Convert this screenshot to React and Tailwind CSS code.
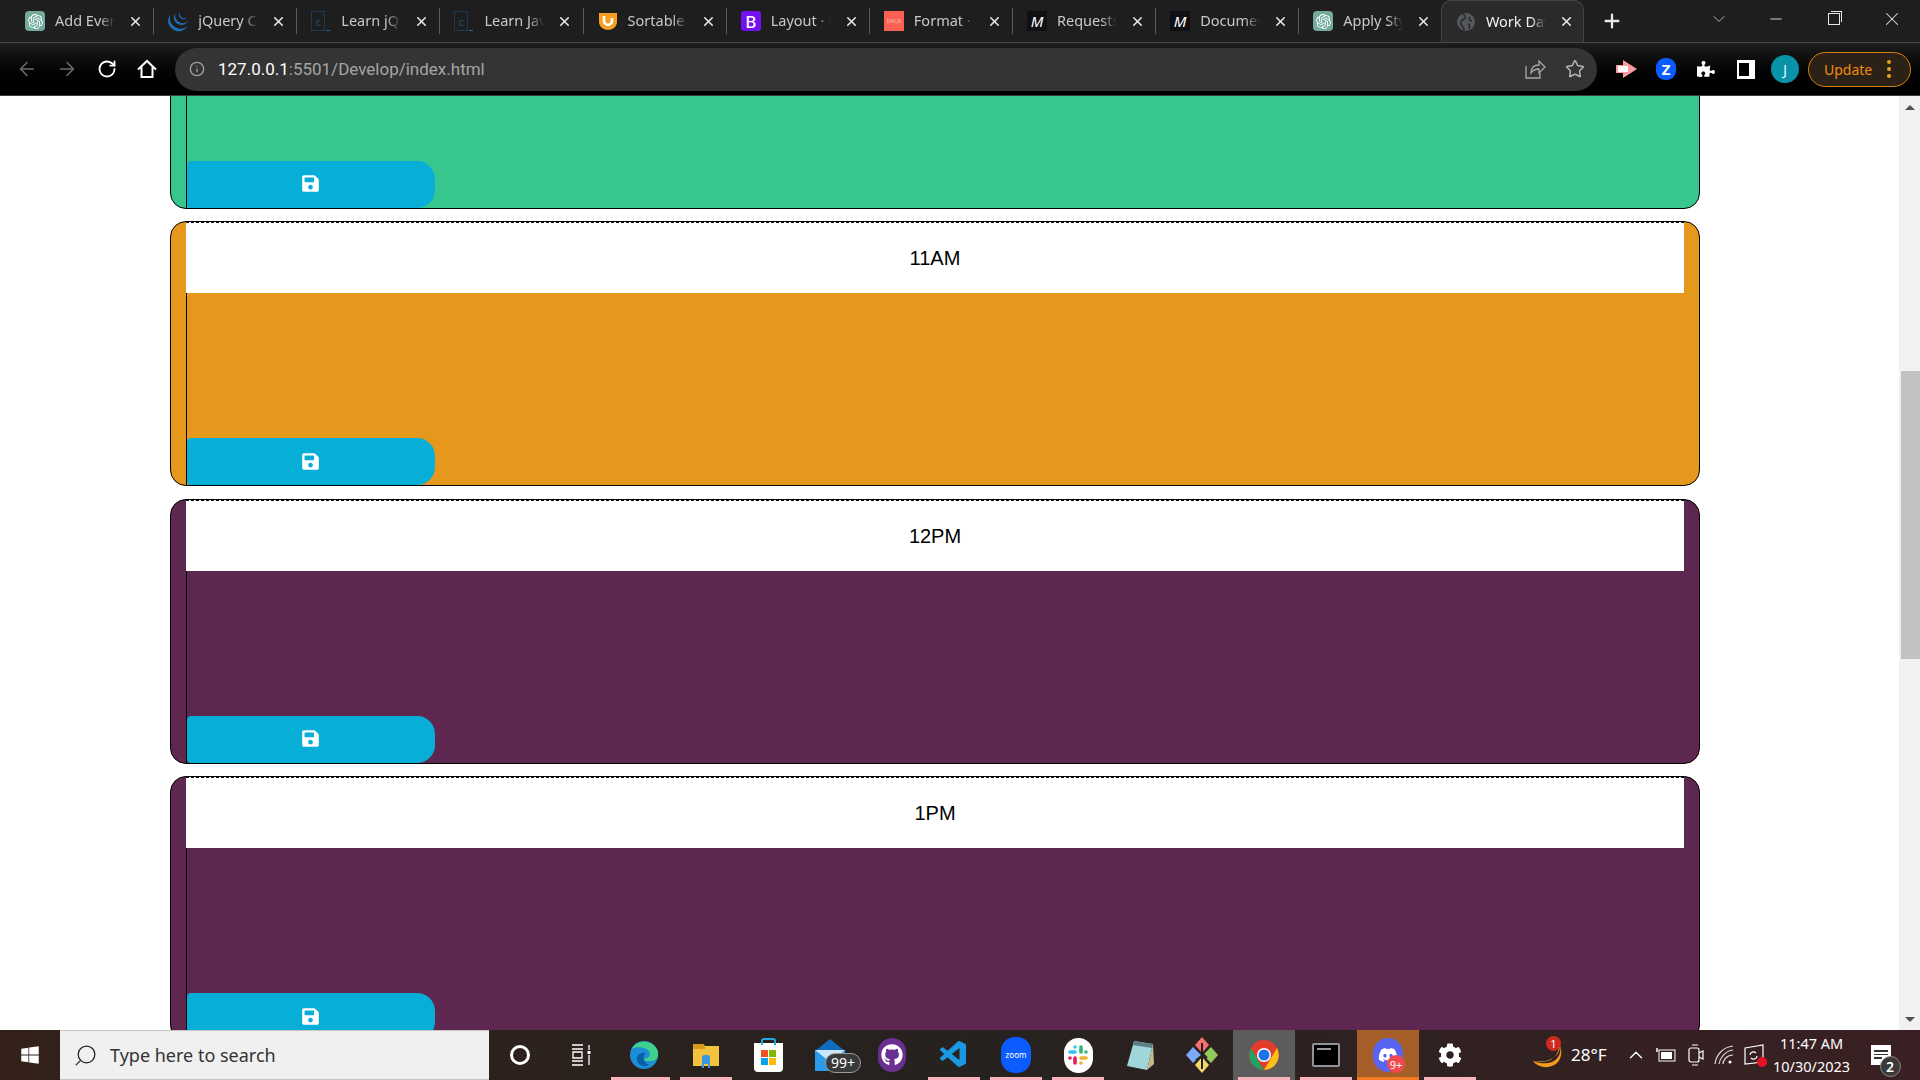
import { ArrowLeft, ArrowRight, RotateCw, Info, Star, X, Plus, ChevronDown, Minus, Search, ChevronUp } from 'lucide-react';
import { FaSave, FaWindows, FaGithub, FaDiscord, FaCog, FaPuzzlePiece } from 'react-icons/fa';
import { SiOpenai, SiJquery } from 'react-icons/si';
import { VscVscode } from 'react-icons/vsc';

const CodeIcon = () => (
  <div className="w-5 h-5 flex items-end gap-px">
    <div className="w-[14px] h-5 border border-[#1d3a52] flex items-center justify-center text-[11px] leading-none text-[#1d4d70]">c</div>
    <div className="w-1 h-px bg-[#1f6aa5]" />
  </div>
);

const ChatIcon = () => (
  <div className="w-5 h-5 rounded-[4px] bg-[#74aa9c] flex items-center justify-center text-white">
    <SiOpenai size={15} />
  </div>
);

const MIcon = () => (
  <div className="w-5 h-5 bg-[#101014] flex items-center justify-center text-white italic text-[15px] font-normal leading-none">M</div>
);

const tabs = [
  { title: 'Add Event', icon: <ChatIcon /> },
  { title: 'jQuery Click', icon: <SiJquery size={21} className="text-[#1f6db5]" /> },
  { title: 'Learn jQuery', icon: <CodeIcon /> },
  { title: 'Learn JavaScript', icon: <CodeIcon /> },
  {
    title: 'Sortable',
    icon: (
      <svg width="20" height="20" viewBox="0 0 20 20">
        <path d="M1 2h18v9c0 5-5 8-9 8s-9-3-9-8z" fill="#f5a11f" />
        <path d="M6 5v5c0 5 8 5 8 0V7" fill="none" stroke="#fff" strokeWidth="2.6" />
      </svg>
    ),
  },
  {
    title: 'Layout · Bootstrap',
    icon: <div className="w-5 h-5 rounded-[3px] bg-[#7411f3] flex items-center justify-center text-white text-[17px] leading-none font-medium">B</div>,
  },
  {
    title: 'Format · Day',
    icon: <div className="w-5 h-5 bg-[#fb6052] flex items-center justify-center text-[#ffc4bd] text-[5px] leading-none">DAY.JS</div>,
  },
  { title: 'Requests', icon: <MIcon /> },
  { title: 'Document', icon: <MIcon /> },
  { title: 'Apply Style', icon: <ChatIcon /> },
];

function Tab({ tab, active }) {
  return (
    <div className={`h-full shrink-0 flex items-center pl-[14px] relative ${active ? 'w-[143px] -ml-[1.5px] bg-[#2a2a2a] rounded-t-[10px] border border-b-0 border-[#444]' : 'w-[143.15px] border-r border-transparent'}`}>
      <div className="w-5 h-5 shrink-0 flex items-center justify-center">{tab.icon}</div>
      <div className={`ml-[10px] w-[60px] overflow-hidden whitespace-nowrap text-[14.5px] [mask-image:linear-gradient(to_right,black_75%,transparent)] ${active ? 'text-[#f1f1f1]' : 'text-[#c8c8c8]'}`}>
        {tab.title}
      </div>
      <X size={15} strokeWidth={2.5} className="ml-[13px] shrink-0 text-[#e8e8e8]" />
    </div>
  );
}

function TabStrip() {
  return (
    <div className="h-[43px] shrink-0 bg-[#1e1e1e] border-b border-[#4a4a4a] flex pl-[11px] pr-[12px] items-stretch">
      {tabs.map((tab) => (
        <div key={tab.title} className="flex items-center">
          <Tab tab={tab} />
          <div className="w-px h-[26px] -ml-px bg-[#5a5a5a]" />
        </div>
      ))}
      <Tab active tab={{ title: 'Work Day Scheduler', icon: (
        <svg width="20" height="20" viewBox="0 0 20 20">
          <circle cx="10" cy="10" r="9" fill="#55585c" />
          <path d="M7 2c3 2 3 4 1 5S4 9 5 12s3 2 3 6M14 5c-2 2 0 4 2 4M12 12c2 0 2 3 1 5" fill="none" stroke="#2a2a2a" strokeWidth="1.6" />
        </svg>
      ) }} />
      <div className="w-[56px] flex items-center justify-center">
        <Plus size={22} strokeWidth={2.5} className="text-[#e8e8e8]" />
      </div>
      <div className="ml-[67px] w-[24px] flex items-center justify-center pb-1">
        <ChevronDown size={20} strokeWidth={1} className="text-[#cfcfcf]" />
      </div>
      <div className="ml-[33px] w-[24px] flex items-center justify-center pb-1">
        <Minus size={18} strokeWidth={1.2} className="text-[#e8e8e8]" />
      </div>
      <div className="ml-[34px] w-[24px] flex items-center justify-center pb-1">
        <div className="w-[12px] h-[12px] border border-[#e8e8e8] relative">
          <div className="absolute -top-[3px] left-[2px] w-[11px] h-[11px] border-t border-r border-[#e8e8e8]" />
        </div>
      </div>
      <div className="ml-[34px] w-[24px] flex items-center justify-center pb-1">
        <X size={22} strokeWidth={1.1} className="text-[#e8e8e8]" />
      </div>
    </div>
  );
}

function Toolbar() {
  return (
    <div className="h-[53px] shrink-0 bg-gradient-to-b from-[#1e1e1e] to-black flex items-center border-b border-[#3c3c3c]">
      <div className="w-[175px] shrink-0 flex items-center pl-[16px] gap-[18px]">
        <ArrowLeft size={22} strokeWidth={1.6} className="text-[#6e6e6e]" />
        <ArrowRight size={22} strokeWidth={1.6} className="text-[#6e6e6e]" />
        <RotateCw size={20} strokeWidth={2.2} className="text-white ml-[1px]" />
        <svg width="22" height="22" viewBox="0 0 22 22" fill="none" stroke="#fff" strokeWidth="2" className="ml-[1px]">
          <path d="M2 11.5L11 3l9 8.5M5.5 9v10h11V9" />
        </svg>
      </div>
      <div className="w-[1422px] h-[43px] rounded-full bg-[#343434] flex items-center pl-[14px] pr-[12px]">
        <Info size={16} strokeWidth={2} className="text-[#a0a0a0]" />
        <div className="ml-[13px] pt-[2px] text-[17px] text-white font-['Roboto',sans-serif]">
          127.0.0.1<span className="text-[#a5a5a5]">:5501/Develop/index.html</span>
        </div>
        <div className="ml-auto flex items-center gap-[19px]">
          <svg width="22" height="22" viewBox="0 0 22 22" fill="none" stroke="#a8a8a8" strokeWidth="1.3">
            <path d="M2 8v12h14v-5" />
            <path d="M7 15c0-5 3-8 8-8V3l6 6-6 6v-4c-3 0-6 1-8 4z" />
          </svg>
          <Star size={20} strokeWidth={1.8} className="text-[#b5b5b5]" />
        </div>
      </div>
      <div className="flex items-center flex-1 pl-[19px]">
        <svg width="22" height="20" viewBox="0 0 22 20" className="shrink-0">
          <path d="M0 6h7V1l14 9-14 9v-5H0z" fill="#fa9aa3" />
          <path d="M2 7h10v6H2z" fill="#fff" />
        </svg>
        <div className="ml-[18px] w-[20px] h-[22px] rounded-[9px] bg-[#0b5cff] flex items-center justify-center text-white text-[15px] font-bold leading-none shrink-0">Z</div>
        <FaPuzzlePiece size={18} className="ml-[21px] text-white shrink-0" />
        <div className="ml-[22px] w-[18px] h-[19px] bg-white pl-[2px] py-[3px] pr-[6px] shrink-0">
          <div className="h-full bg-black" />
        </div>
        <div className="ml-[16px] w-[28px] h-[28px] rounded-full bg-[#0a93a8] flex items-center justify-center text-[#d8f2f5] text-[15px] shrink-0">J</div>
        <div className="ml-[9px] w-[103px] h-[35px] rounded-full border border-[#d5820f] bg-[#2c2116] flex items-center pl-[15px] shrink-0">
          <span className="text-[14px] text-[#f08a0f]">Update</span>
          <div className="ml-[15px] flex flex-col gap-[3px]">
            <div className="w-1 h-1 rounded-full bg-[#f0a020]" />
            <div className="w-1 h-1 rounded-full bg-[#f0a020]" />
            <div className="w-1 h-1 rounded-full bg-[#f0a020]" />
          </div>
        </div>
      </div>
    </div>
  );
}

const hours = [
  { label: '10AM', color: 'bg-[#37c68e]' },
  { label: '11AM', color: 'bg-[#e6981c]' },
  { label: '12PM', color: 'bg-[#5e2750]' },
  { label: '1PM', color: 'bg-[#5e2750]' },
];

function HourCard({ hour }) {
  return (
    <div className={`h-[265px] shrink-0 rounded-[16px] border border-black px-[15px] flex flex-col ${hour.color}`}>
      <div className="h-[71px] shrink-0 bg-white border-t border-dashed border-black flex items-center justify-center text-[20px] text-black font-['Liberation_Sans',sans-serif]">
        {hour.label}
      </div>
      <div className="flex-1 border-l border-black flex flex-col justify-end">
        <button className="w-[248px] h-[47px] rounded-l-[4px] rounded-r-[18px] bg-[#07afd8] flex items-center justify-center pr-[2px] pb-[1px]">
          <FaSave size={19} className="text-white" />
        </button>
      </div>
    </div>
  );
}

function Scrollbar() {
  return (
    <div className="w-[21px] shrink-0 bg-[#f1f1f1] flex flex-col items-end">
      <div className="w-full h-[22px] flex items-center justify-center">
        <div className="w-0 h-0 border-x-[5px] border-x-transparent border-b-[5px] border-b-[#505050]" />
      </div>
      <div className="w-[19px] h-[288px] mt-[253px] bg-[#c1c1c1]" />
      <div className="w-full h-[22px] mt-auto flex items-center justify-center">
        <div className="w-0 h-0 border-x-[5px] border-x-transparent border-t-[5px] border-t-[#505050]" />
      </div>
    </div>
  );
}

const Slack = () => (
  <div className="w-[29px] h-[35px] rounded-full bg-white flex items-center justify-center">
    <svg width="20" height="20" viewBox="0 0 20 20" strokeLinecap="round" strokeWidth="3.6" fill="none">
      <path d="M2 7h5" stroke="#36c5f0" /><path d="M7 2v0" stroke="#36c5f0" />
      <path d="M13 2v5" stroke="#2eb67d" /><path d="M18 7h0" stroke="#2eb67d" />
      <path d="M13 13h5" stroke="#ecb22e" /><path d="M13 18v0" stroke="#ecb22e" />
      <path d="M7 13v5" stroke="#e01e5a" /><path d="M2 13h0" stroke="#e01e5a" />
    </svg>
  </div>
);

const apps = [
  {
    under: 'from-edge',
    icon: (
      <svg width="30" height="36" viewBox="0 0 30 36">
        <circle cx="15" cy="18" r="14" fill="#1b8ed6" />
        <path d="M3 12C7 3 22 2 28 12c3 6 0 12-5 12H13c2-3 8-2 8-7 0-6-12-9-18-5z" fill="#3fd08c" />
        <path d="M8 22c0-5 5-7 9-6-4 2-3 10 3 12-5 3-12 0-12-6z" fill="#0c5ea8" />
      </svg>
    ),
  },
  {
    under: 'full',
    icon: (
      <svg width="28" height="28" viewBox="0 0 28 28">
        <path d="M1 3h10l2 2h14v20H1z" fill="#f3c33e" />
        <path d="M1 3h10l2 2v3H1z" fill="#d69c1d" />
        <path d="M10 17c0-2 1-3 2-3h4c1 0 2 1 2 3v10h-2v-4h-4v4h-2z" fill="#3a96dd" />
      </svg>
    ),
  },
  {
    icon: (
      <div className="w-[29px] h-[29px] bg-white rounded-b-[4px] mt-[5px] relative grid grid-cols-2 gap-px p-[7px] content-center">
        <div className="absolute -top-[5px] left-[7px] right-[7px] h-[7px] border-2 border-b-0 border-[#25a9e0] rounded-t-[3px]" />
        <div className="h-[7px] bg-[#f25022]" /><div className="h-[7px] bg-[#7fba00]" />
        <div className="h-[7px] bg-[#00a4ef]" /><div className="h-[7px] bg-[#ffb900]" />
      </div>
    ),
  },
  {
    icon: (
      <div className="relative w-[30px] h-[34px]">
        <svg width="30" height="34" viewBox="0 0 30 34">
          <path d="M15 1l15 12H0z" fill="#0f6cbd" />
          <path d="M0 12h30v21H0z" fill="#2b9ae9" />
          <path d="M0 12l15 12 15-12H0z" fill="#c9e6fb" />
        </svg>
        <div className="absolute left-[10px] top-[15px] w-[36px] h-[20px] rounded-full bg-[#3a3a3a] border border-[#9a9a9a] text-white text-[14px] leading-none flex items-center justify-center">99+</div>
      </div>
    ),
  },
  {
    icon: (
      <div className="w-[28px] h-[34px] rounded-full bg-[#6b2f8f] flex items-center justify-center">
        <FaGithub size={22} className="text-white" />
      </div>
    ),
  },
  { under: 'full', icon: <VscVscode size={32} className="text-[#1b98e3]" /> },
  {
    under: 'full',
    icon: <div className="w-[30px] h-[36px] rounded-[14px] bg-[#0b5cff] flex items-center justify-center text-white text-[8px] leading-none">zoom</div>,
  },
  { under: 'full', icon: <Slack /> },
  {
    icon: (
      <svg width="28" height="32" viewBox="0 0 28 32">
        <path d="M8 2l19 3-6 26L1 27z" fill="#9fd6da" />
        <path d="M8 2l19 3-1 4-19-3z" fill="#5d7f84" />
        <path d="M21 31l6-26 1 20z" fill="#c7b88c" />
      </svg>
    ),
  },
  {
    icon: (
      <svg width="32" height="38" viewBox="0 0 32 38">
        <path d="M16 1l7 8-7 8-7-8z" fill="#f56f6f" />
        <path d="M7 11l8 8-8 8-7-8z" fill="#7ba9f5" />
        <path d="M25 11l7 8-7 8-8-8z" fill="#93c95d" />
        <path d="M16 21l7 8-7 8-7-8z" fill="#f2d868" />
        <path d="M16 7v26M16 17l5 5M16 20l-6 4" stroke="#222" strokeWidth="2" fill="none" />
      </svg>
    ),
  },
  {
    under: 'full',
    bg: 'bg-[#5c5c5c]',
    icon: (
      <svg width="30" height="30" viewBox="0 0 30 30">
        <circle cx="15" cy="15" r="15" fill="#e33b2e" />
        <path d="M15 30a15 15 0 0 1-13-22l8 14z" fill="#1da462" />
        <path d="M15 30l7-12 6-10a15 15 0 0 1-13 22z" fill="#fbc116" />
        <circle cx="15" cy="15" r="7" fill="#fff" />
        <circle cx="15" cy="15" r="5.5" fill="#1a73e8" />
      </svg>
    ),
  },
  {
    under: 'full',
    icon: (
      <div className="w-[28px] h-[24px] bg-black border-2 border-[#8f9599] rounded-[2px] pl-[3px] pt-[3px]">
        <div className="w-[14px] h-[2px] bg-[#9a9a9a]" />
      </div>
    ),
  },
  {
    under: 'orange',
    bg: 'bg-[#a65f28]',
    icon: (
      <div className="relative w-[30px] h-[34px] rounded-full bg-[#5865f2] flex items-center justify-center">
        <FaDiscord size={20} className="text-white" />
        <div className="absolute left-[14px] top-[17px] w-[18px] h-[18px] rounded-full bg-[#f04a4f] text-white text-[11px] leading-none flex items-center justify-center">9+</div>
      </div>
    ),
  },
  { under: 'full', icon: <FaCog size={24} className="text-white" /> },
];

function TaskbarSlot({ app }) {
  return (
    <div className={`w-[62px] h-full shrink-0 flex items-center justify-center relative ${app.bg || ''}`}>
      {app.icon}
      {app.under === 'full' && <div className="absolute bottom-0 left-[5px] right-[5px] h-[3px] bg-[#f8b3bb]" />}
      {app.under === 'from-edge' && <div className="absolute bottom-0 left-[-2px] right-[5px] h-[3px] bg-[#f8b3bb]" />}
      {app.under === 'orange' && <div className="absolute bottom-0 inset-x-0 h-[3px] bg-[#f47a1f]" />}
    </div>
  );
}

function Taskbar() {
  return (
    <div className="h-[50px] shrink-0 flex items-stretch bg-gradient-to-r from-[#33201a] via-[#262220] to-[#3a2022]">
      <div className="w-[60px] shrink-0 flex items-center justify-center">
        <FaWindows size={20} className="text-white" />
      </div>
      <div className="w-[429px] shrink-0 bg-[#f0f0f0] border-y border-[#c4c4c4] flex items-center pl-[13px]">
        <Search size={25} strokeWidth={1.2} className="text-[#222] -scale-x-100" />
        <span className="ml-[12px] text-[18px] text-[#333] font-['Noto_Sans',sans-serif]">Type here to search</span>
      </div>
      <div className="w-[62px] shrink-0 flex items-center justify-center">
        <div className="w-[20px] h-[20px] rounded-full border-[3px] border-white" />
      </div>
      <div className="w-[62px] shrink-0 flex items-center justify-center pr-[3px]">
        <svg width="20" height="22" viewBox="0 0 20 22" fill="none" stroke="#fff" strokeWidth="1.3">
          <path d="M1 1h11M1 21h11M1 5h11M1 17h11M2 8h9v6H2zM18 1v5M18 11v10" />
          <rect x="16.5" y="7" width="3" height="3" fill="#fff" stroke="none" />
        </svg>
      </div>
      {apps.map((app, i) => (
        <TaskbarSlot key={i} app={app} />
      ))}
      <div className="flex-1 flex items-center pl-[51px] text-white">
        <div className="relative w-[30px] h-[30px] shrink-0">
          <svg width="30" height="30" viewBox="0 0 30 30">
            <path d="M28 4c3 14-8 24-27 17 6 8 19 8 25 1 4-5 4-12 2-18z" fill="#f59a1c" />
            <path d="M28 4c1 10-8 20-27 17 8 2 24 3 27-17z" fill="#f0b429" />
          </svg>
          <div className="absolute -top-[4px] left-[14px] w-[15px] h-[15px] rounded-full bg-[#cf2a1f] text-white text-[11px] leading-none flex items-center justify-center">1</div>
        </div>
        <span className="ml-[9px] text-[17px] font-['Noto_Sans',sans-serif]">28°F</span>
        <ChevronUp size={22} strokeWidth={1.5} className="ml-[18px] shrink-0" />
        <svg width="20" height="16" viewBox="0 0 20 16" className="ml-[9px] shrink-0" fill="none" stroke="#fff">
          <rect x="3" y="3" width="16" height="11" />
          <rect x="5" y="5" width="11" height="7" fill="#fff" stroke="none" />
          <path d="M1 1v4" strokeWidth="1.5" />
        </svg>
        <svg width="16" height="24" viewBox="0 0 16 24" className="ml-[12px] shrink-0" fill="none" stroke="#fff" strokeWidth="1.2">
          <path d="M4 2h6M4 22h6" />
          <rect x="1" y="5" width="10" height="14" rx="2" />
          <path d="M11 10l4-2v8l-4-2" />
        </svg>
        <svg width="20" height="20" viewBox="0 0 20 20" className="ml-[10px] shrink-0" fill="none" stroke="#d8d8d8" strokeWidth="1.2">
          <path d="M1 19C2 10 9 2 19 1M5 19C6 13 11 6 19 5M9 19c0-4 4-9 10-9" />
          <circle cx="16" cy="17" r="1.6" fill="#fff" stroke="none" />
        </svg>
        <div className="relative w-[20px] h-[22px] ml-[10px] shrink-0">
          <svg width="20" height="22" viewBox="0 0 20 22" fill="none" stroke="#fff" strokeWidth="1.2">
            <path d="M1 4l18-3v17L1 20z" />
            <path d="M6 11c0-3 4-4 6-2M13 12c0 3-4 4-6 2" />
          </svg>
          <div className="absolute right-[-3px] bottom-[-1px] w-[10px] h-[10px] rounded-full bg-[#e81123]" />
        </div>
        <div className="ml-[5px] flex flex-col items-center text-[14.5px] leading-[23px] font-['Noto_Sans',sans-serif] shrink-0 w-[86px]">
          <span>11:47 AM</span>
          <span>10/30/2023</span>
        </div>
        <div className="relative ml-[16px] w-[20px] h-[20px] bg-white flex flex-col gap-[2px] px-[3px] pt-[5px] shrink-0">
          <div className="h-[1.5px] bg-[#333]" />
          <div className="h-[1.5px] bg-[#333]" />
          <div className="h-[1.5px] w-[8px] bg-[#333]" />
          <div className="absolute left-[9px] top-[11px] w-[21px] h-[21px] rounded-full bg-[#3a3a3a] border border-[#8a8a8a] text-white text-[14px] font-semibold leading-none flex items-center justify-center">2</div>
        </div>
      </div>
    </div>
  );
}

export default function App() {
  return (
    <div className="w-[1920px] h-[1080px] flex flex-col overflow-hidden font-['Noto_Sans',sans-serif]">
      <TabStrip />
      <Toolbar />
      <div className="flex-1 min-h-0 flex bg-white">
        <div className="flex-1 min-w-0 overflow-hidden">
          <div className="ml-[170px] w-[1530px] -mt-[152.5px] flex flex-col gap-[12.5px]">
            {hours.map((hour) => (
              <HourCard key={hour.label} hour={hour} />
            ))}
          </div>
        </div>
        <Scrollbar />
      </div>
      <Taskbar />
    </div>
  );
}
